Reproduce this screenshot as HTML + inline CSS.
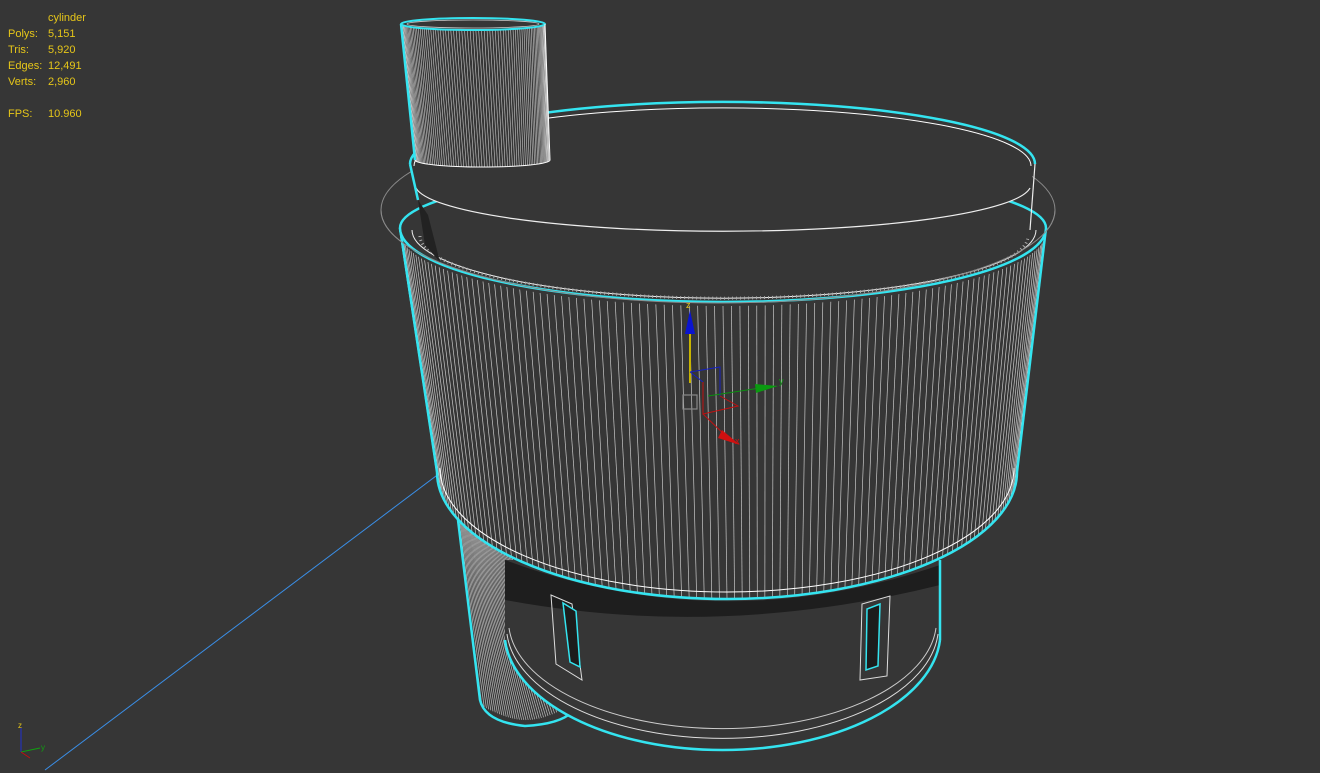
<!DOCTYPE html>
<html><head><meta charset="utf-8"><style>
html,body{margin:0;padding:0;background:#363636;width:1320px;height:773px;overflow:hidden}
#s{position:absolute;left:0;top:0}
.t{position:absolute;font:11px "Liberation Sans",sans-serif;color:#e6c619;}
</style></head><body>
<svg id="s" width="1320" height="773" xmlns="http://www.w3.org/2000/svg">
<rect width="1320" height="773" fill="#363636"/>
<line x1="45" y1="770" x2="670" y2="300" stroke="#3a8ee6" stroke-width="1"/>
<g id="g"></g>
</svg>
<div class="t" style="left:48px;top:12px">cylinder</div>
<div class="t" style="left:8px;top:28px">Polys:</div><div class="t" style="left:48px;top:28px">5,151</div>
<div class="t" style="left:8px;top:44px">Tris:</div><div class="t" style="left:48px;top:44px">5,920</div>
<div class="t" style="left:8px;top:60px">Edges:</div><div class="t" style="left:48px;top:60px">12,491</div>
<div class="t" style="left:8px;top:76px">Verts:</div><div class="t" style="left:48px;top:76px">2,960</div>
<div class="t" style="left:8px;top:108px">FPS:</div><div class="t" style="left:48px;top:108px">10.960</div>
<script>
var g=document.getElementById('g'),h='';
function L(a,b,c,d,col,w){h+='<line x1="'+a+'" y1="'+b+'" x2="'+c+'" y2="'+d+'" stroke="'+col+'" stroke-width="'+(w||1)+'"/>';}
// left pipe
h+='<path d="M458,520 L480,700 Q485,722 525,726 Q560,724 572,712 L497,520Z" fill="#363636"/>';
for(var i=0;i<=40;i++){var t=i/40;L(458+t*39,520,482+t*88,706+14*Math.sin(Math.PI*t),'#bbb',0.7);}
h+='<path d="M458,520 L480,700 Q485,722 525,726 Q560,724 572,712" fill="none" stroke="#34e4f0" stroke-width="2.5"/>';
// lower base
h+='<path d="M505,560 L505,640 A218,118 0 0 0 940,640 L940,560 Z" fill="#363636"/>';
h+='<path d="M505,560 Q720,640 940,565 L940,585 Q720,640 505,600Z" fill="#1e1e1e"/>';
h+='<path d="M505,640 A218,118 0 0 0 940,640" fill="none" stroke="#34e4f0" stroke-width="2.5"/>';
h+='<path d="M507,634 A216,112 0 0 0 938,634" fill="none" stroke="#ddd" stroke-width="1"/>';
h+='<path d="M509,628 A214,108 0 0 0 936,628" fill="none" stroke="#ccc" stroke-width="1"/>';
L(940,560,940,640,'#34e4f0',2.5);
// windows
h+='<polygon points="551,595 572,604 582,680 556,664" fill="none" stroke="#ddd"/><polygon points="563,603 576,611 580,667 570,662" fill="#1c1c1c" stroke="#34e4f0" stroke-width="1.5"/>';
h+='<polygon points="890,596 887,676 860,680 862,604" fill="none" stroke="#ddd"/><polygon points="880,604 878,666 866,670 867,609" fill="#1c1c1c" stroke="#34e4f0" stroke-width="1.5"/>';
// grey ring back
h+='<ellipse cx="718" cy="210" rx="337" ry="93" fill="none" stroke="#8a8a8a" stroke-width="1"/>';
// body
var cxT=723,rxT=323,cyT=228,ryT=74,cxB=727,rxB=290,cyB=472,ryB=127;
h+='<path d="M400,228 A323,74 0 0 0 1046,228 L1017,472 A290,127 0 0 1 437,472 Z" fill="#363636"/>';
for(var i=0;i<=120;i++){var a=Math.PI*i/120,c=Math.cos(a),s=Math.sin(a);L(cxT-rxT*c,cyT+ryT*s+4,cxB-rxB*c,cyB+ryB*s,'#c8c8c8',0.7);}
h+='<path d="M437,472 A290,127 0 0 0 1017,472" fill="none" stroke="#34e4f0" stroke-width="2.5"/>';
h+='<path d="M440,468 A287,124 0 0 0 1014,468" fill="none" stroke="#fff" stroke-width="1"/>';
L(400,228,437,472,'#34e4f0',2.5);L(1046,228,1017,472,'#34e4f0',2.5);
h+='<path d="M400,228 A323,74 0 0 0 1046,228 A323,58 0 0 0 400,228Z" fill="#363636" stroke="#34e4f0" stroke-width="2.5"/>';
h+='<path d="M412,230 A311,68 0 0 0 1036,230" fill="none" stroke="#eee" stroke-width="1"/>';
h+='<path d="M420,236 A303,62 0 0 0 1028,236" fill="none" stroke="#aaa" stroke-width="3" stroke-dasharray="1 3"/>';
// grey ring front
h+='<path d="M381,210 A337,93 0 0 0 1055,210" fill="none" stroke="#8a8a8a" stroke-width="1"/>';
// lid
h+='<path d="M410,162 A312,62 0 0 1 1035,162 L1030,188 A308,47 0 0 1 416,188 Z" fill="#363636"/>';
h+='<path d="M416,188 A308,47 0 0 0 1030,188" fill="none" stroke="#eee" stroke-width="1.2"/>';
h+='<path d="M410,164 A312,62 0 0 1 1035,164" fill="none" stroke="#34e4f0" stroke-width="2.5"/>';
h+='<path d="M414,166 A308,58 0 0 1 1031,166" fill="none" stroke="#fff" stroke-width="1"/>';
L(410,164,418,200,'#34e4f0',2.5);L(1035,164,1030,230,'#eee',1.2);
h+='<path d="M418,200 L428,215 L440,262 L425,245Z" fill="#222" stroke="none"/>';
// top pipe
h+='<path d="M401,24 L415,160 A67,7 0 0 0 550,160 L545,24Z" fill="#363636"/>';
for(var i=0;i<=80;i++){var a=Math.PI*i/80,c=Math.cos(a),s=Math.sin(a);L(473-72*c,24+6*s,482-67*c,160+7*s,'#c8c8c8',0.6);}
h+='<path d="M415,160 A67,7 0 0 0 550,160" fill="none" stroke="#fff" stroke-width="1"/>';
h+='<ellipse cx="473" cy="24" rx="72" ry="6" fill="#363636" stroke="#34e4f0" stroke-width="2"/>';
h+='<ellipse cx="473" cy="24" rx="66" ry="4" fill="none" stroke="#ccc" stroke-width="0.8"/>';
L(401,24,415,160,'#34e4f0',2.5);L(545,24,550,160,'#fff',1);
// gizmo
L(690,330,690,383,'#c8b400',2);
h+='<polygon points="690,310 685,334 695,334" fill="#0a14d0"/>';
h+='<text x="686" y="308" fill="#e6c619" font-size="9" font-family="Liberation Sans">z</text>';
h+='<polyline points="690,372 720,367 720,396" fill="none" stroke="#1520c0"/><line x1="690" y1="372" x2="703" y2="382" stroke="#1520c0"/>';
h+='<polyline points="703,382 703,414 738,406 720,396" fill="none" stroke="#c01010"/><line x1="703" y1="414" x2="730" y2="440" stroke="#c01010"/>';
h+='<polygon points="722,430 740,445 718,438" fill="#d01010"/>';
h+='<line x1="708" y1="396" x2="760" y2="388" stroke="#0a9010"/><polygon points="755,384 778,386 756,393" fill="#0a9a10"/>';
h+='<text x="779" y="384" fill="#0a9a10" font-size="9" font-family="Liberation Sans">y</text><text x="735" y="444" fill="#d01010" font-size="9" font-family="Liberation Sans">x</text>';
h+='<rect x="683" y="395" width="14" height="14" fill="none" stroke="#888" stroke-width="1.2"/>';
// corner axes
L(21,728,21,752,'#2030d0');L(21,752,40,748,'#10a010');L(21,752,30,758,'#c01010');
h+='<text x="18" y="728" fill="#e6c619" font-size="8" font-family="Liberation Sans">z</text><text x="41" y="750" fill="#10a010" font-size="8" font-family="Liberation Sans">y</text>';
g.innerHTML=h;
</script>
</body></html>
